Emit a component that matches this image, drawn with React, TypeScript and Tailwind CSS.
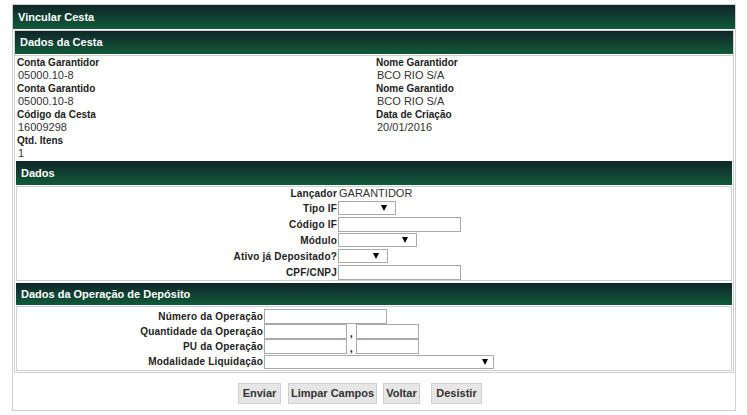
import React from "react";

/* barra verde com degradê */
const Bar = ({ title, h }: { title: string; h: string }) => (
  <div
    className={`${h} flex items-center pl-[5px] bg-gradient-to-b from-[#0f2528] to-[#0e5b3a] text-white text-[11px] font-bold`}
  >
    {title}
  </div>
);

const Arrow = () => (
  <svg width="6" height="6" viewBox="0 0 6 6">
    <polygon points="0,0 6,0 3,6" fill="#000" />
  </svg>
);

const Select = ({ w, pr = "pr-[8px]" }: { w: string; pr?: string }) => (
  <div className={`${w} ${pr} h-[14px] bg-white border border-[#a9a9a9] flex items-center justify-end`}>
    <Arrow />
  </div>
);

const Input = ({ w }: { w: string }) => (
  <div className={`${w} h-[15px] bg-white border border-[#a9a9a9]`} />
);

const Field = ({ label, value }: { label: string; value: string }) => (
  <div>
    <div className="h-[13px] leading-[13px] pl-[2px] text-[10px] font-bold text-[#222]">{label}</div>
    <div className="h-[13px] leading-[13px] pl-[3px] text-[11px] text-[#333]">{value}</div>
  </div>
);

export default function App() {
  return (
    <div className="pt-[4px] pl-[12px] bg-white min-h-[415px] font-['Liberation_Sans',Arial,sans-serif]">
      <div className="w-[724px] border border-[#cfcfcf]">
        <Bar title="Vincular Cesta" h="h-[24px]" />

        {/* bloco principal */}
        <div className="mx-[1px] mt-[1px] border border-[#cfcfcf]">
          <Bar title="Dados da Cesta" h="h-[23px]" />

          <div className="mt-[1px] border-t border-[#cfcfcf] grid grid-cols-2">
            <div>
              <Field label="Conta Garantidor" value="05000.10-8" />
              <Field label="Conta Garantido" value="05000.10-8" />
              <Field label="Código da Cesta" value="16009298" />
              <Field label="Qtd. Itens" value="1" />
            </div>
            <div>
              <Field label="Nome Garantidor" value="BCO RIO S/A" />
              <Field label="Nome Garantido" value="BCO RIO S/A" />
              <Field label="Data de Criação" value="20/01/2016" />
            </div>
          </div>

          {/* Dados */}
          <div className="mx-[1px] mt-[1px]">
            <Bar title="Dados" h="h-[24px]" />
            <div className="mt-[1px] border border-[#cfcfcf] text-[10px] font-bold tracking-[0.2px] text-[#222]">
              <div className="h-[13px] flex items-center">
                <div className="w-[320px] text-right">Lançador</div>
                <div className="ml-[2px] text-[11px] font-normal tracking-normal text-[#333]">GARANTIDOR</div>
              </div>
              <div className="h-[16px] flex items-center">
                <div className="w-[320px] text-right">Tipo IF</div>
                <div className="ml-[1px]"><Select w="w-[58px]" /></div>
              </div>
              <div className="h-[16px] flex items-center">
                <div className="w-[320px] text-right">Código IF</div>
                <div className="ml-[1px]"><Input w="w-[123px]" /></div>
              </div>
              <div className="h-[16px] flex items-center">
                <div className="w-[320px] text-right">Módulo</div>
                <div className="ml-[1px]"><Select w="w-[79px]" /></div>
              </div>
              <div className="h-[16px] flex items-center">
                <div className="w-[320px] text-right">Ativo já Depositado?</div>
                <div className="ml-[1px]"><Select w="w-[50px]" /></div>
              </div>
              <div className="h-[16px] flex items-center">
                <div className="w-[320px] text-right">CPF/CNPJ</div>
                <div className="ml-[1px]"><Input w="w-[123px]" /></div>
              </div>
            </div>
          </div>

          {/* Dados da Operação de Depósito */}
          <div className="mx-[1px] mt-[2px] mb-[1px]">
            <Bar title="Dados da Operação de Depósito" h="h-[22px]" />
            <div className="mt-[1px] border border-[#cfcfcf] pt-[2px] pb-[1px] text-[10px] font-bold tracking-[0.2px] text-[#222]">
              <div className="h-[15px] flex items-center">
                <div className="w-[246px] text-right">Número da Operação</div>
                <div className="ml-[1px]"><Input w="w-[123px]" /></div>
              </div>
              <div className="h-[15px] flex items-center">
                <div className="w-[246px] text-right">Quantidade da Operação</div>
                <div className="ml-[1px] flex items-center">
                  <Input w="w-[83px]" />
                  <span className="w-[9px] text-center text-[11px] leading-[15px] pt-[3px]">,</span>
                  <Input w="w-[63px]" />
                </div>
              </div>
              <div className="h-[15px] flex items-center">
                <div className="w-[246px] text-right">PU da Operação</div>
                <div className="ml-[1px] flex items-center">
                  <Input w="w-[83px]" />
                  <span className="w-[9px] text-center text-[11px] leading-[15px] pt-[3px]">,</span>
                  <Input w="w-[63px]" />
                </div>
              </div>
              <div className="h-[15px] flex items-center">
                <div className="w-[246px] text-right">Modalidade Liquidação</div>
                <div className="ml-[1px]"><Select w="w-[230px]" pr="pr-[5px]" /></div>
              </div>
            </div>
          </div>
        </div>

        {/* botões */}
        <div className="h-[37px] pt-[10px] pl-[225px] flex items-start text-[11px] font-bold text-[#333]">
          <button className="w-[43px] h-[21px] bg-[#e6e6e6] border border-[#cfcfcf]">Enviar</button>
          <button className="ml-[7px] w-[89px] h-[21px] bg-[#e6e6e6] border border-[#cfcfcf]">Limpar Campos</button>
          <button className="ml-[6px] w-[37px] h-[21px] bg-[#e6e6e6] border border-[#cfcfcf]">Voltar</button>
          <button className="ml-[11px] w-[51px] h-[21px] bg-[#e6e6e6] border border-[#cfcfcf]">Desistir</button>
        </div>
      </div>
    </div>
  );
}
